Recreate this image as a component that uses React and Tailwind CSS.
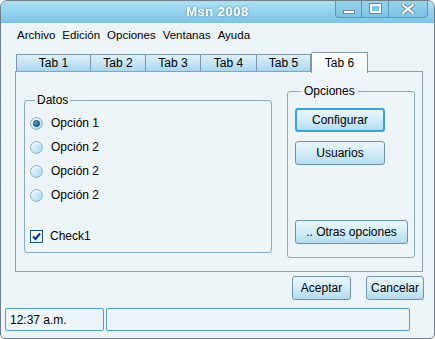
import React from "react";

const font = { fontFamily: '"Liberation Sans", Arial, sans-serif' };

function Tab({ label, active, w }) {
  if (active) {
    return (
      <div
        className={`h-[21px] -mb-px relative z-10 border border-b-0 border-[#7d97a8] bg-gradient-to-b from-white to-[#eef6fa] flex items-center justify-center rounded-t-[2px] ${w}`}
      >
        <span className="text-[12px] text-black pb-[1px]">{label}</span>
      </div>
    );
  }
  return (
    <div
      className={`h-[18px] border border-[#7d97a8] border-l-0 first:border-l bg-gradient-to-b from-[#dff1fa] to-[#a9d7ee] flex items-center justify-center ${w}`}
    >
      <span className="text-[12px] text-black">{label}</span>
    </div>
  );
}

function Radio({ label, checked }) {
  return (
    <div className="flex items-center gap-[8px] h-[24px]">
      <div className="w-[13px] h-[13px] rounded-full border border-[#8fb0c4] bg-gradient-to-br from-[#f4fbff] to-[#a8d6ef] flex items-center justify-center">
        {checked && (
          <div className="w-[7px] h-[7px] rounded-full bg-gradient-to-br from-[#5fb7ea] to-[#0b4f8c] border border-[#0d3f6e]" />
        )}
      </div>
      <span className="text-[12px] text-black">{label}</span>
    </div>
  );
}

function Btn({ children, w, focus }) {
  return (
    <div
      className={`h-[24px] rounded-[3px] flex items-center justify-center bg-gradient-to-b from-[#eaf6fc] via-[#d2ecf9] to-[#b3dcf1] ${w} ${
        focus ? "border-2 border-[#3aa2dc]" : "border border-[#6e93ab]"
      }`}
    >
      <span className="text-[12px] text-black">{children}</span>
    </div>
  );
}

export default function App() {
  return (
    <div className="w-[435px] h-[339px] bg-white" style={font}>
      <div className="w-[435px] h-[339px] border border-[#707e88] rounded-t-[7px] rounded-b-[5px] bg-[#ecf4f8] flex flex-col overflow-hidden">
        {/* Title bar */}
        <div className="h-[23px] relative bg-gradient-to-b from-[#acdff3] to-[#7cc5e5] border-b border-white flex items-center justify-center">
          <span className="text-white font-bold text-[13px] tracking-[0.5px] drop-shadow-[0_0_1px_rgba(40,90,120,0.6)]">
            Msn 2008
          </span>
          <div className="absolute right-[6px] top-[-1px] h-[18px] flex border border-[#5c97b8] border-t-0 rounded-b-[4px] bg-gradient-to-b from-[#9bd4ec] to-[#7cc3e3] overflow-hidden">
            <div className="w-[26px] flex items-center justify-center border-r border-[#5c97b8]">
              <div className="w-[12px] h-[4px] mt-[6px] bg-white border border-[#6e8796]" />
            </div>
            <div className="w-[27px] flex items-center justify-center border-r border-[#5c97b8]">
              <div className="w-[11px] h-[9px] border-2 border-[#f4f8fa] outline outline-1 outline-[#6e8796] bg-[#7cc3e3]" />
            </div>
            <div className="w-[38px] flex items-center justify-center">
              <svg width="14" height="10" viewBox="0 0 14 10">
                <path d="M2 1 L12 9 M12 1 L2 9" stroke="#6e8796" strokeWidth="4" strokeLinecap="square" />
                <path d="M2 1 L12 9 M12 1 L2 9" stroke="#f4f8fa" strokeWidth="2.2" strokeLinecap="square" />
              </svg>
            </div>
          </div>
        </div>

        {/* Menu */}
        <div className="h-[21px] mt-[1px] flex items-center gap-[7px] pl-[16px] text-[11.5px] text-black">
          <span>Archivo</span>
          <span>Edición</span>
          <span>Opciones</span>
          <span>Ventanas</span>
          <span>Ayuda</span>
        </div>

        {/* Tabs */}
        <div className="mt-[6px] pl-[15px] flex items-end">
          <Tab label="Tab 1" w="w-[75px]" />
          <Tab label="Tab 2" w="w-[55px]" />
          <Tab label="Tab 3" w="w-[55px]" />
          <Tab label="Tab 4" w="w-[56px]" />
          <Tab label="Tab 5" w="w-[54px]" />
          <Tab label="Tab 6" active w="w-[57px]" />
        </div>

        {/* Tab panel */}
        <div className="ml-[14px] w-[408px] h-[201px] -mt-px border border-[#8aa3b3] bg-[#eef5f9] flex items-start">
          <fieldset className="ml-[8px] mt-[21px] w-[248px] h-[160px] border border-[#86a9bf] rounded-[3px] pl-[5px] pr-0 pt-[4px]">
            <legend className="ml-[5px] px-[2px] text-[12px] text-black leading-[14px]">Datos</legend>
            <Radio label="Opción 1" checked />
            <Radio label="Opción 2" />
            <Radio label="Opción 2" />
            <Radio label="Opción 2" />
            <div className="mt-[20px] flex items-center gap-[7px] h-[18px]">
              <div className="w-[13px] h-[13px] border border-[#1d4f7e] bg-gradient-to-br from-white to-[#dbeef8] flex items-center justify-center">
                <svg width="9" height="9" viewBox="0 0 9 9">
                  <path d="M1 4.5 L3.5 7 L8 1.5" stroke="#0b2f86" strokeWidth="2" fill="none" />
                </svg>
              </div>
              <span className="text-[12px] text-black">Check1</span>
            </div>
          </fieldset>
          <fieldset className="ml-[15px] mt-[12px] w-[128px] h-[174px] border border-[#86a9bf] rounded-[3px] pl-[7px] pt-[10px] flex flex-col">
            <legend className="ml-[6px] px-[3px] text-[12px] text-black leading-[14px]">Opciones</legend>
            <Btn w="w-[90px]" focus>
              Configurar
            </Btn>
            <div className="mt-[9px]">
              <Btn w="w-[90px]">Usuarios</Btn>
            </div>
            <div className="mt-[55px]">
              <Btn w="w-[113px]">.. Otras opciones</Btn>
            </div>
          </fieldset>
        </div>

        {/* Dialog buttons */}
        <div className="mt-[4px] flex justify-end gap-[15px] pr-[10px]">
          <Btn w="w-[59px]">Aceptar</Btn>
          <Btn w="w-[58px]">Cancelar</Btn>
        </div>

        {/* Status bar */}
        <div className="mt-[8px] flex gap-[2px] pl-[4px]">
          <div className="w-[99px] h-[23px] border border-[#4fa0cc] rounded-[2px] bg-[#eef5f9] flex items-center pl-[4px]">
            <span className="text-[12px] text-black">12:37 a.m.</span>
          </div>
          <div className="w-[304px] h-[23px] border border-[#4fa0cc] rounded-[2px] bg-[#eef5f9]" />
        </div>
      </div>
    </div>
  );
}
